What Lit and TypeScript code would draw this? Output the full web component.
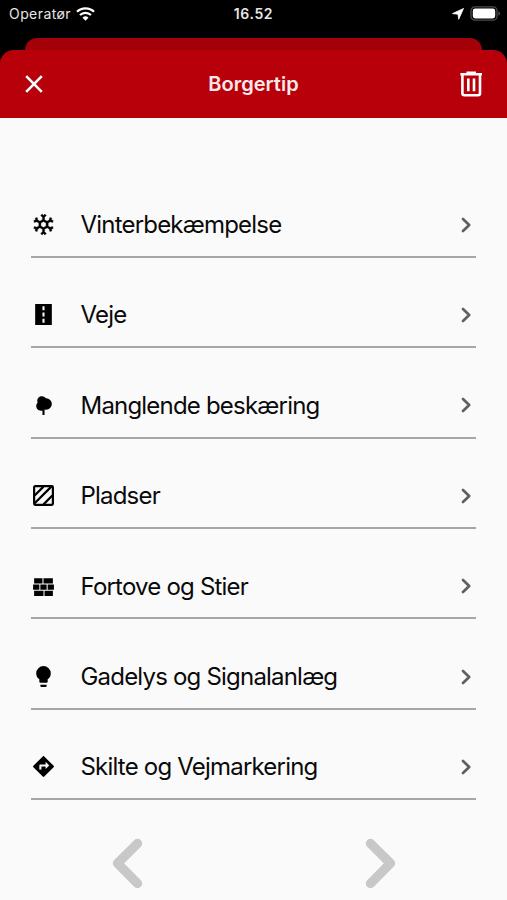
import { LitElement, html, css, svg } from "lit";
import { customElement } from "lit/decorators.js";

const ICONS = {
  snow: svg`<path fill-rule="evenodd" stroke="currentColor" stroke-width="0.4" d="M20.79,13.95L18.46,14.57L16.46,13.44V10.56L18.46,9.43L20.79,10.05L21.31,8.12L19.54,7.65L20,5.88L18.07,5.36L17.45,7.69L15.45,8.82L13,7.38V5.12L14.71,3.41L13.29,2L12,3.29L10.71,2L9.29,3.41L11,5.12V7.38L8.5,8.82L6.5,7.69L5.92,5.36L4,5.88L4.47,7.65L2.7,8.12L3.22,10.05L5.55,9.43L7.55,10.56V13.45L5.55,14.58L3.22,13.96L2.7,15.89L4.47,16.36L4,18.12L5.93,18.64L6.55,16.31L8.55,15.18L11,16.62V18.88L9.29,20.59L10.71,22L12,20.71L13.29,22L14.7,20.59L13,18.88V16.62L15.5,15.17L17.5,16.3L18.12,18.63L20,18.12L19.53,16.35L21.3,15.88L20.79,13.95M9.5,10.56L12,9.11L14.5,10.56V13.44L12,14.89L9.5,13.44V10.56Z"/>`,
  road: svg`<path fill-rule="evenodd" d="M11,16H13V20H11ZM11,10H13V14H11ZM11,4H13V8H11ZM4,22H20V2H4V22Z"/>`,
  tree: svg`<path d="M11,21V16.74C10.53,16.91 10.03,17 9.5,17C7,17 5,15 5,12.5C5,11.23 5.5,10.09 6.36,9.27C6.13,8.73 6,8.13 6,7.5C6,5 8,3 10.5,3C12.06,3 13.44,3.8 14.25,5C14.33,5 14.41,5 14.5,5A5.5,5.5 0 0,1 20,10.5A5.5,5.5 0 0,1 14.5,16C14,16 13.5,15.93 13,15.79V21H11Z"/>`,
  hatch: svg`<g fill="none" stroke="currentColor" stroke-width="2.1"><rect x="3" y="3" width="18" height="18" rx="1"/><path d="M3.5 12L12 3.5M3.5 19.5L19.5 3.5M12 20.5L20.5 12"/></g>`,
  wall: svg`<path d="M3,16H12V21H3V16M2,10H8V15H2V10M9,10H15V15H9V10M16,10H22V15H16V10M13,16H21V21H13V16M3,4H11V9H3V4M12,4H21V9H12V4Z"/>`,
  bulb: svg`<path d="M12,2A7,7 0 0,0 5,9C5,11.38 6.19,13.47 8,14.74V17A1,1 0 0,0 9,18H15A1,1 0 0,0 16,17V14.74C17.81,13.47 19,11.38 19,9A7,7 0 0,0 12,2M9,21A1,1 0 0,0 10,22H14A1,1 0 0,0 15,21V20H9V21Z"/>`,
  sign: svg`<path fill-rule="evenodd" d="M14,14.5V12H10V15H8V11A1,1 0 0,1 9,10H14V7.5L17.5,11ZM21.71,11.29L12.71,2.29H12.7C12.31,1.9 11.68,1.9 11.29,2.29L2.29,11.29C1.9,11.68 1.9,12.32 2.29,12.71L11.29,21.71C11.68,22.09 12.31,22.1 12.71,21.71L21.71,12.71C22.1,12.32 22.1,11.68 21.71,11.29Z"/>`,
};

const ROWS: { icon: keyof typeof ICONS; label: string }[] = [
  { icon: "snow", label: "Vinterbekæmpelse" },
  { icon: "road", label: "Veje" },
  { icon: "tree", label: "Manglende beskæring" },
  { icon: "hatch", label: "Pladser" },
  { icon: "wall", label: "Fortove og Stier" },
  { icon: "bulb", label: "Gadelys og Signalanlæg" },
  { icon: "sign", label: "Skilte og Vejmarkering" },
];

@customElement("app-root")
export class AppRoot extends LitElement {
  static styles = css`
    :host {
      display: flex;
      flex-direction: column;
      height: 900px;
      overflow: hidden;
      background: #000;
      font-family: Inter, "Liberation Sans", sans-serif;
    }
    svg { display: block; flex: none; }
    .status {
      display: grid;
      grid-template-columns: 1fr auto 1fr;
      align-items: center;
      height: 27.5px;
      padding: 0 6px 0 9px;
      box-sizing: border-box;
      color: #e6e6e6;
      font-size: 14px;
    }
    .carrier { display: flex; align-items: center; gap: 5px; letter-spacing: 0.42px; }
    .clock { margin-left: -3px; font-weight: 600; font-size: 14px; letter-spacing: 0.6px; }
    .power { display: flex; align-items: center; justify-content: flex-end; gap: 6px; }
    .behind {
      height: 12px;
      margin: 10px 25px 0;
      background: #a30009;
      border-radius: 12px 12px 0 0;
    }
    .sheet {
      flex: 1;
      display: flex;
      flex-direction: column;
    }
    .bar {
      display: grid;
      grid-template-columns: 1fr auto 1fr;
      align-items: center;
      height: 68.7px;
      padding: 0 24px;
      box-sizing: border-box;
      background: #b8000b;
      border-radius: 14px 14px 0 0;
      color: #fff;
    }
    .title { font-size: 20px; font-weight: 600; letter-spacing: 0; color: #fbe9ea; }
    .trash { justify-self: end; }
    .content { flex: 1; background: #fafafa; }
    .list { padding: 49.2px 31px 0; }
    .row {
      display: flex;
      align-items: center;
      height: 90.4px;
      padding: 26px 0 0;
      box-sizing: border-box;
      border-bottom: 2px solid #a6a6a6;
      color: #0a0a0a;
    }
    .label {
      flex: 1;
      margin-left: 24.5px;
      font-size: 24px;
      letter-spacing: -0.8px;
      white-space: nowrap;
    }
    .icon { color: #000; }
    .chev { margin-right: 4px; }
    .pager {
      display: flex;
      justify-content: space-between;
      padding: 37px 110px 0;
    }
  `;

  render() {
    return html`
      <div class="status">
        <div class="carrier">
          <span>Operatør</span>
          <svg width="19" height="14" viewBox="0 0 19 14" fill="none" stroke="#fff" stroke-width="2.3">
            <path d="M1 4.8A12.2 12.2 0 0 1 18 4.8" />
            <path d="M4 8A8 8 0 0 1 15 8" />
            <path d="M9.5 13.8L6.5 10.7A4.3 4.3 0 0 1 12.5 10.7Z" fill="#fff" stroke="none" />
          </svg>
        </div>
        <span class="clock">16.52</span>
        <div class="power">
          <svg width="12" height="12" viewBox="0 0 12 12"><path d="M11.5 0.5L6.7 11.3L6 6.2L0.5 5.6Z" fill="#fff" stroke="#fff" stroke-width="0.8" stroke-linejoin="round" /></svg>
          <svg width="31" height="15" viewBox="0 0 31 15">
            <rect x="1" y="0.8" width="26" height="13.4" rx="4" fill="none" stroke="#4c4c4c" stroke-width="1.3" />
            <rect x="2.8" y="2.6" width="22.4" height="9.8" rx="2.4" fill="#fff" />
            <path d="M28.4 5.2Q30.2 6 30.2 7.5Q30.2 9 28.4 9.8Z" fill="#4c4c4c" />
          </svg>
        </div>
      </div>
      <div class="behind"></div>
      <div class="sheet">
        <div class="bar">
          <svg width="20" height="20" viewBox="0 0 20 20" stroke="#fff" stroke-width="2.6"><path d="M2.2 2.2L17.8 17.8M17.8 2.2L2.2 17.8" /></svg>
          <span class="title">Borgertip</span>
          <svg class="trash" width="24" height="28" viewBox="0 0 24 28" fill="none" stroke="#fff" stroke-width="2.6">
            <path d="M1.4 4.3H23M7.5 2.9H17" />
            <path d="M3.4 4V23.2Q3.4 25.2 5.4 25.2H19Q21 25.2 21 23.2V4" />
            <path d="M9.3 8.5V21.2M15 8.5V21.2" />
          </svg>
        </div>
        <div class="content">
          <div class="list">
            ${ROWS.map(
              (r) => html`<div class="row">
                <svg class="icon" width="25" height="25" viewBox="0 0 24 24" fill="currentColor">${ICONS[r.icon]}</svg>
                <span class="label">${r.label}</span>
                <svg class="chev" width="12" height="18" viewBox="0 0 12 18" fill="none" stroke="#606060" stroke-width="2.7" stroke-linecap="round" stroke-linejoin="round"><path d="M3 3L9.2 9L3 15" /></svg>
              </div>`
            )}
          </div>
          <div class="pager">
            <svg width="34" height="52" viewBox="0 0 34 52" fill="none" stroke="#c8c8c8" stroke-width="9.4" stroke-linecap="round" stroke-linejoin="round"><path d="M27.5 6.5L7.5 26.3L27.5 46.5" /></svg>
            <svg width="34" height="52" viewBox="0 0 34 52" fill="none" stroke="#c8c8c8" stroke-width="9.4" stroke-linecap="round" stroke-linejoin="round"><path d="M7.5 6.5L27.5 26.3L7.5 46.5" /></svg>
          </div>
        </div>
      </div>
    `;
  }
}
